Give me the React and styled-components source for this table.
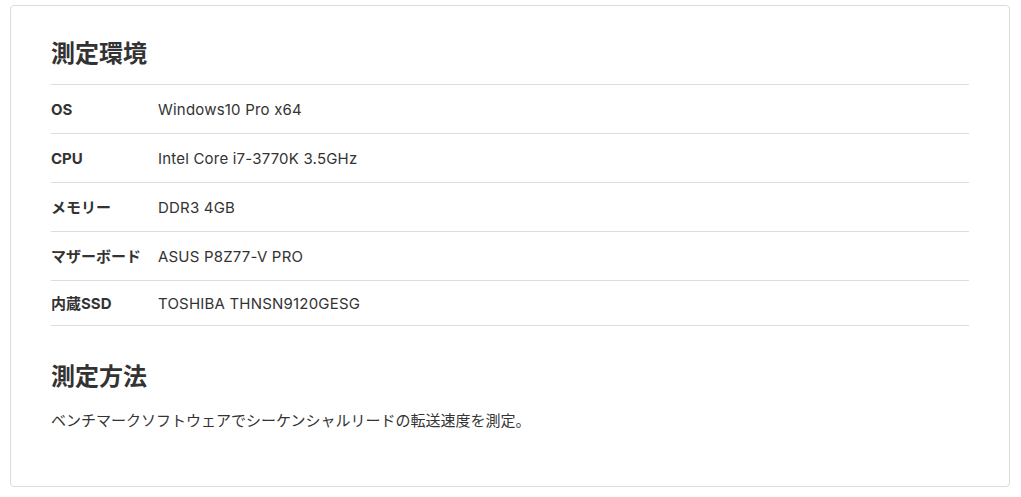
import React from 'react';
import styled, { createGlobalStyle } from 'styled-components';

const GlobalStyle = createGlobalStyle`
  body {
    margin: 0;
    background: #fff;
    color: #333;
    font-family: Inter, 'Noto Sans CJK JP', sans-serif;
  }
`;

const Page = styled.div`
  padding: 5px 11px 10px 10px;
`;

const Card = styled.section`
  border: 1px solid #dcdcdc;
  border-radius: 4px;
  padding: 29px 40px 53px;
`;

const Heading = styled.h2`
  font-family: 'Noto Sans CJK JP', sans-serif;
  font-size: 24px;
  font-weight: 700;
  line-height: 33px;
  margin: ${({ spaced }) => (spaced ? '32px 0 15px' : '0 0 16px')};
  color: #333;
`;

const SpecTable = styled.div`
  border-bottom: 1px solid #ddd;
`;

const SpecRow = styled.div`
  display: grid;
  grid-template-columns: 107px 1fr;
  align-items: center;
  border-top: 1px solid #ddd;
  padding: ${({ last }) => (last ? '11px 0 9px' : '13px 0 11px')};
  font-size: 15px;
  line-height: 24px;
`;

const Label = styled.div`
  font-weight: 700;
`;

const Value = styled.div`
  font-weight: 400;
  letter-spacing: 0.2px;
`;

const Text = styled.p`
  margin: 0;
  font-family: 'Noto Sans CJK JP', sans-serif;
  font-size: 15px;
  line-height: 27px;
`;

const specs = [
  ['OS', 'Windows10 Pro x64'],
  ['CPU', 'Intel Core i7-3770K 3.5GHz'],
  ['メモリー', 'DDR3 4GB'],
  ['マザーボード', 'ASUS P8Z77-V PRO'],
  ['内蔵SSD', 'TOSHIBA THNSN9120GESG'],
];

const App = () => (
  <Page>
    <GlobalStyle />
    <Card>
      <Heading>測定環境</Heading>
      <SpecTable>
        {specs.map(([label, value], index) => (
          <SpecRow key={label} last={index === specs.length - 1}>
            <Label>{label}</Label>
            <Value>{value}</Value>
          </SpecRow>
        ))}
      </SpecTable>
      <Heading spaced>測定方法</Heading>
      <Text>ベンチマークソフトウェアでシーケンシャルリードの転送速度を測定。</Text>
    </Card>
  </Page>
);

export default App;
